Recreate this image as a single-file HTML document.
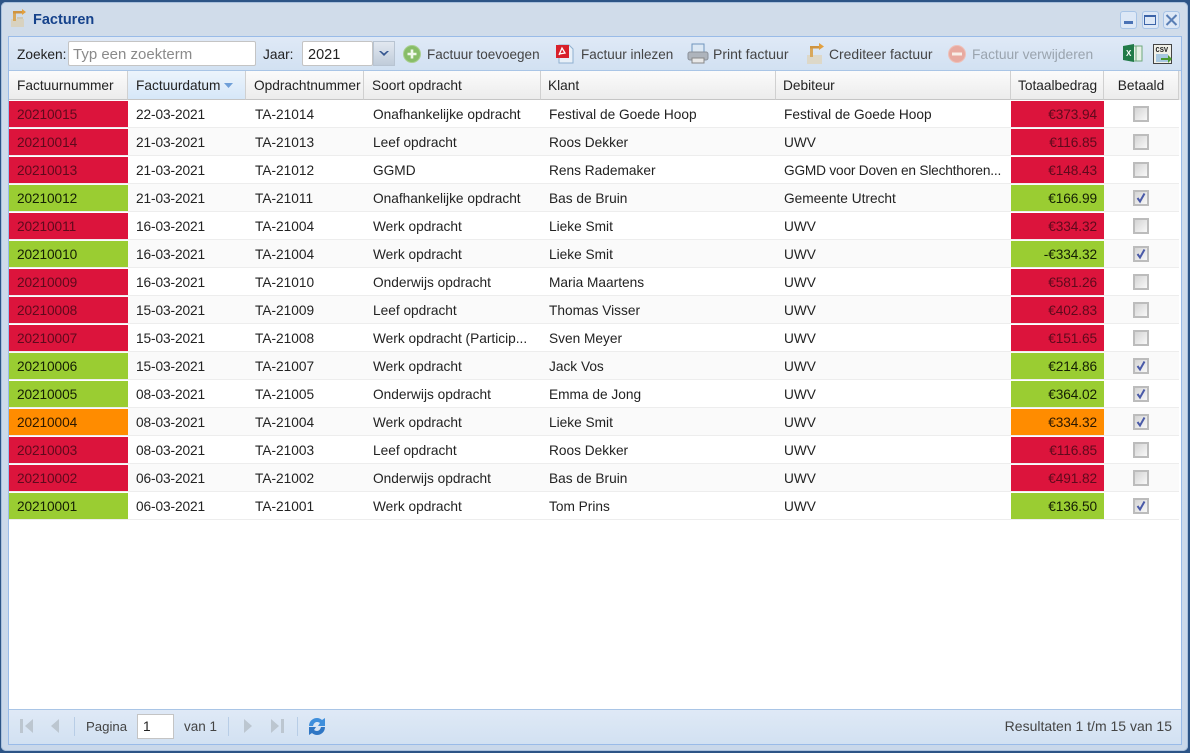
<!DOCTYPE html>
<html><head><meta charset="utf-8"><style>
html,body{margin:0;padding:0}
body{width:1190px;height:753px;overflow:hidden;position:relative;background:#2c5486;font-family:"Liberation Sans",sans-serif;font-size:14px;color:#222}
#win{position:absolute;left:1px;top:2px;width:1187px;height:749px;background:linear-gradient(#d0dcea,#c9d8ea);border-radius:5px;box-shadow:inset 0 0 0 1px #a9c0dc}
#panel{position:absolute;left:7px;top:34px;width:1172px;height:707px;background:#fff;border:1px solid #99bbe8}
.a{position:absolute;white-space:nowrap}
.t{font-size:13.7px;line-height:16px}
#tb{position:absolute;left:0;top:0;width:100%;height:34px;box-sizing:border-box;background:linear-gradient(#dfe9f6,#d2e1f2);border-bottom:1px solid #a9c5e6}
#gap{position:absolute;left:1170px;top:34px;width:2px;height:29px;background:#ebebeb}
#ft{position:absolute;left:0;top:672px;width:100%;height:35px;background:linear-gradient(#dfe9f6,#d2e1f2);border-top:1px solid #a9c5e6;box-sizing:border-box}
table{position:absolute;left:0;top:34px;border-collapse:separate;border-spacing:0;table-layout:fixed;width:1170px}
th{height:29px;padding:0 0 0 8px;font-weight:normal;text-align:left;background:linear-gradient(#fbfbfb,#ececec);border-right:1px solid #d0d0d0;border-bottom:1px solid #c5c5c5;box-sizing:border-box;white-space:nowrap;overflow:hidden;color:#222;font-size:13.7px}
th.s{background:linear-gradient(#ecf4fc,#d6e7f8)}
th:nth-child(5),th:nth-child(6){padding-left:7px}
td{height:28px;padding:1px 0 0 9px;box-sizing:border-box;border-bottom:1px solid #ededed;white-space:nowrap;overflow:hidden;font-size:13.7px;color:#222}
td:nth-child(2){padding-left:8px;letter-spacing:-.1px}
td:nth-child(5),td:nth-child(6){padding-left:8px}
tr.o td{background:#fafafa}
td.c{position:relative;padding:0;letter-spacing:-.1px}
td.c i{position:absolute;left:0;top:1px;right:0;bottom:0;font-style:normal;padding:0 0 0 8px;line-height:27px}
td.amt i{text-align:right;padding:0 7px 0 0}
.r i{background:#dc143c;color:#5e0a1c}
.g i{background:#9acd32;color:#141f04}
.y i{background:#ff8c00;color:#2c1800}
td.k{padding:0;text-align:center}
.cb{display:inline-block;width:16px;height:16px;border:2px solid #bcbcbc;background:linear-gradient(135deg,#d4d4d4,#f8f8f8);vertical-align:middle;position:relative;left:-1px;top:0;box-sizing:border-box}
.cb svg{position:absolute;left:0;top:0}
</style></head><body>
<div id="win">
<svg class="a" style="left:8px;top:6px" width="18" height="20" viewBox="0 0 18 20"><rect x="2" y="11" width="13" height="8" fill="#d8d2c0"/><rect x="4" y="4" width="3" height="9" fill="#d8a85c"/><rect x="4" y="3" width="10" height="2.5" fill="#cf9440"/><path d="M13 1l4 3-4 3z" fill="#e2a040"/><rect x="8" y="9" width="6" height="2" fill="#cfc8b4"/></svg>
<div class="a" style="left:32px;top:10px;font:bold 14.5px/17px 'Liberation Sans',sans-serif;color:#15428b">Facturen</div>
<div class="a" style="left:1119px;top:9px;width:15px;height:16px;border:1px solid #a8c4e6;border-radius:3px;background:#dde8f6"><div class="a" style="left:3px;top:9px;width:9px;height:3px;background:#4a72b5"></div></div>
<div class="a" style="left:1141px;top:9px;width:15px;height:16px;border:1px solid #a8c4e6;border-radius:3px;background:#dde8f6"><div class="a" style="left:1px;top:3px;width:10px;height:7px;border:1.5px solid #3c64a8;border-top-width:2.5px"></div></div>
<svg class="a" style="left:1162px;top:9px" width="17" height="18" viewBox="0 0 17 18"><rect x=".5" y=".5" width="16" height="17" rx="3" fill="#dde8f6" stroke="#a8c4e6"/><path d="M3.5 4l10 10M13.5 4l-10 10" stroke="#5a7fb5" stroke-width="2"/></svg>
<div id="panel">
<div id="tb">
<div class="a t" style="left:8px;top:10px">Zoeken:</div>
<div class="a t" style="left:59px;top:4px;width:188px;height:25px;box-sizing:border-box;border:1px solid #c4c4c4;background:#fff;line-height:26px;padding-left:4px;color:#8a8a8a;border-radius:2px;font-size:15px">Typ een zoekterm</div>
<div class="a t" style="left:254px;top:10px">Jaar:</div>
<div class="a t" style="left:293px;top:4px;width:71px;height:25px;box-sizing:border-box;border:1px solid #c4c4c4;background:#fff;line-height:26px;padding-left:5px;border-radius:2px;color:#222;font-size:14.5px">2021</div>
<div class="a" style="left:364px;top:4px;width:22px;height:25px;background:linear-gradient(#e2e8f0,#c0ccda);border:1px solid #b8c4d2;box-sizing:border-box"><svg width="20" height="23"><path d="M5 9l5 5 5-5-2 0-3 2.5L7 9z" fill="#35568f"/></svg></div>
<svg class="a" style="left:393px;top:7px" width="20" height="20"><circle cx="10" cy="10" r="8.5" fill="#88bd68" stroke="#a9cf90"/><path d="M10 5.5v9M5.5 10h9" stroke="#f0f8ea" stroke-width="2.6"/></svg>
<div class="a t" style="left:418px;top:10px;color:#444;font-size:13.5px">Factuur toevoegen</div>
<svg class="a" style="left:546px;top:6px" width="20" height="22"><path d="M4 2h10l4 4v14H4z" fill="#e8f0f8" stroke="#8fb0d0"/><rect x="1" y="2" width="13" height="13" fill="#d8202a"/><path d="M4 12l3-7 3 5-6 1" fill="none" stroke="#fff" stroke-width="1.3"/></svg>
<div class="a t" style="left:572px;top:10px;color:#444;font-size:13.5px">Factuur inlezen</div>
<svg class="a" style="left:678px;top:6px" width="22" height="22"><rect x="5" y="1" width="12" height="9" fill="#dce8f4" stroke="#6f95bd"/><rect x="1" y="9" width="20" height="8" rx="2" fill="#aeb4bc" stroke="#8a9098"/><rect x="5" y="15" width="12" height="5" fill="#e8e8e8" stroke="#888"/></svg>
<div class="a t" style="left:704px;top:9px;color:#444;font-size:14px">Print factuur</div>
<svg class="a" style="left:796px;top:6px" width="20" height="22"><rect x="2" y="12" width="15" height="9" fill="#ddd8c8"/><rect x="5" y="4" width="3" height="10" fill="#d8a85c"/><rect x="5" y="3" width="10" height="2.5" fill="#cf9440"/><path d="M14 0l5 3.5-5 3.5z" fill="#e2a040"/></svg>
<div class="a t" style="left:820px;top:9px;color:#444;font-size:13.9px">Crediteer factuur</div>
<svg class="a" style="left:938px;top:7px" width="20" height="20"><circle cx="10" cy="10" r="8.5" fill="#e8aaa0" stroke="#eec0b8"/><rect x="5" y="8.5" width="10" height="3" fill="#f8efe8"/></svg>
<div class="a t" style="left:963px;top:10px;color:#9aa4ae;font-size:13.8px">Factuur verwijderen</div>
<svg class="a" style="left:1113px;top:6px" width="22" height="20"><rect x="9" y="3" width="11" height="15" fill="#e6f0e6" stroke="#6ea87c"/><path d="M14 3v15" stroke="#6ea87c"/><path d="M1 3l11-2v18L1 17z" fill="#217a48"/><text x="4" y="13" font-size="8" font-weight="bold" fill="#fff" font-family="Liberation Sans">X</text></svg>
<svg class="a" style="left:1144px;top:7px" width="20" height="22"><rect x=".5" y=".5" width="18" height="19" fill="#f0f0e8" stroke="#444"/><text x="2.5" y="8" font-size="7" font-weight="bold" fill="#222" font-family="Liberation Mono">CSV</text><rect x="3" y="10" width="12" height="8" fill="#a8c8e0"/><path d="M8 14h7v-3l4 4-4 4v-3H8z" fill="#4a9a30"/></svg>
</div>
<div id="gap"></div>
<table>
<colgroup><col style="width:119px"><col style="width:118px"><col style="width:118px"><col style="width:177px"><col style="width:235px"><col style="width:235px"><col style="width:93px"><col style="width:75px"></colgroup>
<tr><th>Factuurnummer</th><th class="s">Factuurdatum <svg width="9" height="5" style="vertical-align:middle"><path d="M0 0h9L4.5 5z" fill="#6f9fd8"/></svg></th><th>Opdrachtnummer</th><th>Soort opdracht</th><th>Klant</th><th>Debiteur</th><th style="padding-left:7px">Totaalbedrag</th><th style="text-align:center;padding:0">Betaald</th></tr>
<tr><td class="c r"><i>20210015</i></td><td>22-03-2021</td><td>TA-21014</td><td>Onafhankelijke opdracht</td><td>Festival de Goede Hoop</td><td>Festival de Goede Hoop</td><td class="c amt r"><i>€373.94</i></td><td class="k"><span class="cb"></span></td></tr>
<tr class="o"><td class="c r"><i>20210014</i></td><td>21-03-2021</td><td>TA-21013</td><td>Leef opdracht</td><td>Roos Dekker</td><td>UWV</td><td class="c amt r"><i>€116.85</i></td><td class="k"><span class="cb"></span></td></tr>
<tr><td class="c r"><i>20210013</i></td><td>21-03-2021</td><td>TA-21012</td><td>GGMD</td><td>Rens Rademaker</td><td style="letter-spacing:-.2px">GGMD voor Doven en Slechthoren...</td><td class="c amt r"><i>€148.43</i></td><td class="k"><span class="cb"></span></td></tr>
<tr class="o"><td class="c g"><i>20210012</i></td><td>21-03-2021</td><td>TA-21011</td><td>Onafhankelijke opdracht</td><td>Bas de Bruin</td><td>Gemeente Utrecht</td><td class="c amt g"><i>€166.99</i></td><td class="k"><span class="cb"><svg width="12" height="12"><path d="M2.5 6l2.5 3.5L9.5 1.5" fill="none" stroke="#4a5aa8" stroke-width="2"/></svg></span></td></tr>
<tr><td class="c r"><i>20210011</i></td><td>16-03-2021</td><td>TA-21004</td><td>Werk opdracht</td><td>Lieke Smit</td><td>UWV</td><td class="c amt r"><i>€334.32</i></td><td class="k"><span class="cb"></span></td></tr>
<tr class="o"><td class="c g"><i>20210010</i></td><td>16-03-2021</td><td>TA-21004</td><td>Werk opdracht</td><td>Lieke Smit</td><td>UWV</td><td class="c amt g"><i>-€334.32</i></td><td class="k"><span class="cb"><svg width="12" height="12"><path d="M2.5 6l2.5 3.5L9.5 1.5" fill="none" stroke="#4a5aa8" stroke-width="2"/></svg></span></td></tr>
<tr><td class="c r"><i>20210009</i></td><td>16-03-2021</td><td>TA-21010</td><td>Onderwijs opdracht</td><td>Maria Maartens</td><td>UWV</td><td class="c amt r"><i>€581.26</i></td><td class="k"><span class="cb"></span></td></tr>
<tr class="o"><td class="c r"><i>20210008</i></td><td>15-03-2021</td><td>TA-21009</td><td>Leef opdracht</td><td>Thomas Visser</td><td>UWV</td><td class="c amt r"><i>€402.83</i></td><td class="k"><span class="cb"></span></td></tr>
<tr><td class="c r"><i>20210007</i></td><td>15-03-2021</td><td>TA-21008</td><td>Werk opdracht (Particip...</td><td>Sven Meyer</td><td>UWV</td><td class="c amt r"><i>€151.65</i></td><td class="k"><span class="cb"></span></td></tr>
<tr class="o"><td class="c g"><i>20210006</i></td><td>15-03-2021</td><td>TA-21007</td><td>Werk opdracht</td><td>Jack Vos</td><td>UWV</td><td class="c amt g"><i>€214.86</i></td><td class="k"><span class="cb"><svg width="12" height="12"><path d="M2.5 6l2.5 3.5L9.5 1.5" fill="none" stroke="#4a5aa8" stroke-width="2"/></svg></span></td></tr>
<tr><td class="c g"><i>20210005</i></td><td>08-03-2021</td><td>TA-21005</td><td>Onderwijs opdracht</td><td>Emma de Jong</td><td>UWV</td><td class="c amt g"><i>€364.02</i></td><td class="k"><span class="cb"><svg width="12" height="12"><path d="M2.5 6l2.5 3.5L9.5 1.5" fill="none" stroke="#4a5aa8" stroke-width="2"/></svg></span></td></tr>
<tr class="o"><td class="c y"><i>20210004</i></td><td>08-03-2021</td><td>TA-21004</td><td>Werk opdracht</td><td>Lieke Smit</td><td>UWV</td><td class="c amt y"><i>€334.32</i></td><td class="k"><span class="cb"><svg width="12" height="12"><path d="M2.5 6l2.5 3.5L9.5 1.5" fill="none" stroke="#4a5aa8" stroke-width="2"/></svg></span></td></tr>
<tr><td class="c r"><i>20210003</i></td><td>08-03-2021</td><td>TA-21003</td><td>Leef opdracht</td><td>Roos Dekker</td><td>UWV</td><td class="c amt r"><i>€116.85</i></td><td class="k"><span class="cb"></span></td></tr>
<tr class="o"><td class="c r"><i>20210002</i></td><td>06-03-2021</td><td>TA-21002</td><td>Onderwijs opdracht</td><td>Bas de Bruin</td><td>UWV</td><td class="c amt r"><i>€491.82</i></td><td class="k"><span class="cb"></span></td></tr>
<tr><td class="c g"><i>20210001</i></td><td>06-03-2021</td><td>TA-21001</td><td>Werk opdracht</td><td>Tom Prins</td><td>UWV</td><td class="c amt g"><i>€136.50</i></td><td class="k"><span class="cb"><svg width="12" height="12"><path d="M2.5 6l2.5 3.5L9.5 1.5" fill="none" stroke="#4a5aa8" stroke-width="2"/></svg></span></td></tr>
</table>
<div id="ft">
<svg class="a" style="left:10px;top:8px" width="16" height="16"><rect x="1" y="1" width="3" height="14" fill="#bcc6d0"/><path d="M14 1v14L6 8z" fill="#bcc6d0"/></svg>
<svg class="a" style="left:40px;top:8px" width="12" height="16"><path d="M10 1v14L2 8z" fill="#bcc6d0"/></svg>
<div class="a" style="left:65px;top:7px;width:1px;height:19px;background:#b8cde6"></div>
<div class="a t" style="left:77px;top:9px;color:#444;font-size:13.2px">Pagina</div>
<div class="a t" style="left:128px;top:4px;width:37px;height:25px;box-sizing:border-box;border:1px solid #c4c4c4;background:#fff;line-height:23px;padding-left:5px">1</div>
<div class="a t" style="left:175px;top:9px;color:#444;font-size:13.5px">van 1</div>
<div class="a" style="left:219px;top:7px;width:1px;height:19px;background:#b8cde6"></div>
<svg class="a" style="left:233px;top:8px" width="12" height="16"><path d="M2 1v14l8-7z" fill="#bcc6d0"/></svg>
<svg class="a" style="left:261px;top:8px" width="16" height="16"><path d="M1 1v14l8-7z" fill="#bcc6d0"/><rect x="11" y="1" width="3" height="14" fill="#bcc6d0"/></svg>
<div class="a" style="left:288px;top:7px;width:1px;height:19px;background:#b8cde6"></div>
<svg class="a" style="left:298px;top:6px" width="20" height="21" viewBox="0 0 20 21"><path d="M2 10C2 5 6 2 10 2c2 0 4 1 5 2l3-2v8h-7l2-3c-3-2-6-1-7 3z" fill="#3f8fdc"/><path d="M18 11c0 5-4 8-8 8-2 0-4-1-5-2l-3 2v-8h7l-2 3c3 2 6 1 7-3z" fill="#2f76c4"/></svg>
<div class="a t" style="right:9px;top:8px;color:#444;font-size:14px">Resultaten 1 t/m 15 van 15</div>
</div>
</div>
</div>
</body></html>
